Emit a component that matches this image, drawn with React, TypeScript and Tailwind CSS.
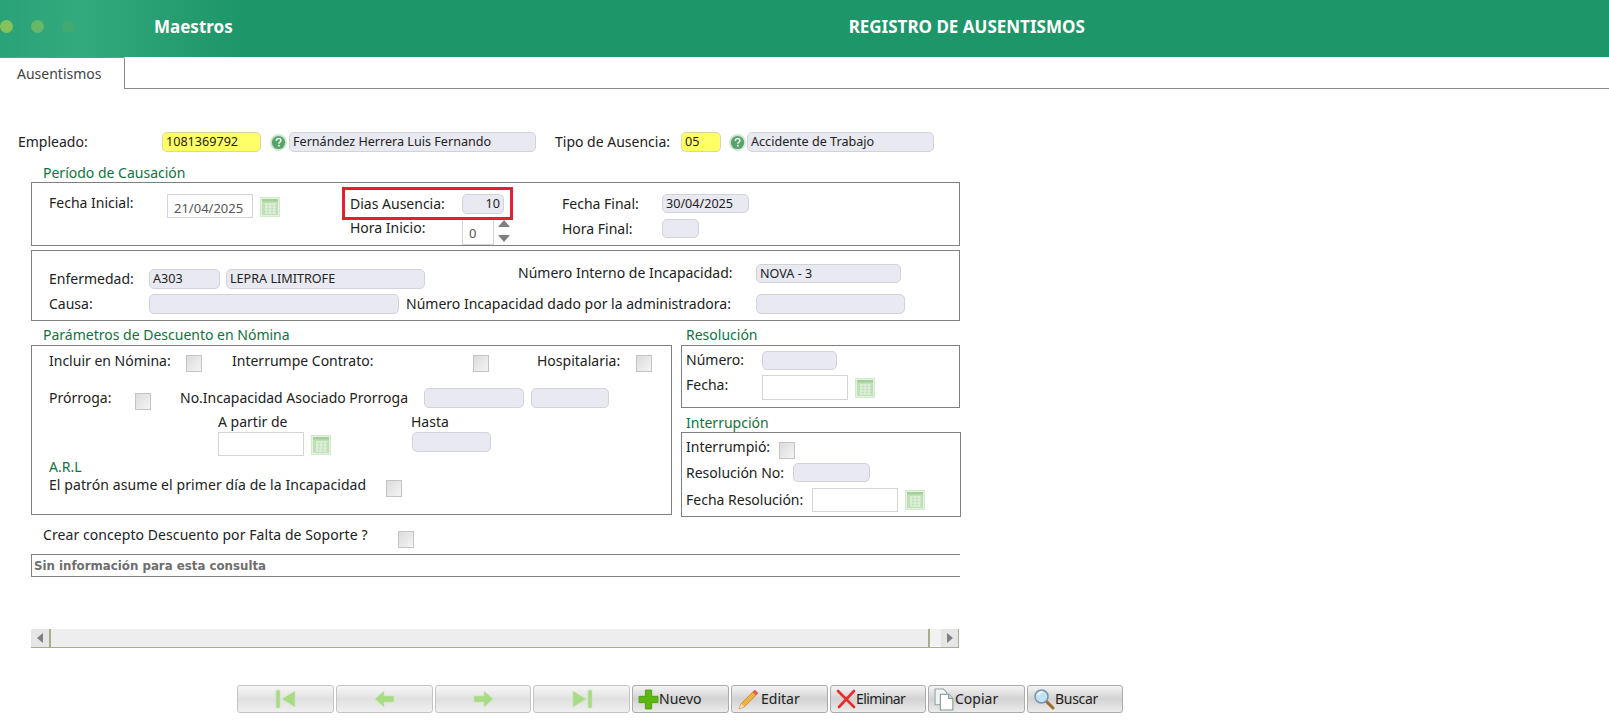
const font = { fontFamily: '"Noto Sans", sans-serif' };

const Ro = ({ className = "", children }: { className?: string; children?: React.ReactNode }) => (
  <div className={`shrink-0 whitespace-nowrap rounded-[5px] border border-[#d2d3d8] bg-[#e8e9f1] px-[3px] text-[12.6px] leading-[17px] text-[#222] ${className}`}>
    {children}
  </div>
);

const DateBox = ({ className = "", children }: { className?: string; children?: React.ReactNode }) => (
  <div className={`shrink-0 border border-[#d4d4d4] bg-white px-[6px] text-[13px] text-[#555] ${className}`}>
    {children}
  </div>
);

const Cal = ({ className = "" }: { className?: string }) => (
  <svg viewBox="0 0 20 20" className={`h-[20px] w-[20px] shrink-0 ${className}`}>
    <rect x="0.5" y="0.5" width="19" height="19" fill="#e4f2df" stroke="#d3e8cd" />
    <rect x="2" y="2" width="16" height="16" fill="#bfe0b6" />
    <rect x="2" y="2" width="16" height="2.5" fill="#a3cf98" />
    <path d="M5 7h11M5 10h11M5 13h11M5 16h11M6 6v11M10 6v11M14 6v11" stroke="#e6f3e2" strokeWidth="1.1" />
  </svg>
);

const Check = ({ className = "" }: { className?: string }) => (
  <div className={`h-[17px] w-[16px] shrink-0 border border-[#c4c4c4] bg-gradient-to-br from-[#dcdcdc] to-[#f4f4f4] ${className}`} />
);

const Help = ({ className = "" }: { className?: string }) => (
  <svg viewBox="0 0 17 17" className={`h-[17px] w-[17px] shrink-0 ${className}`}>
    <circle cx="8.5" cy="8.5" r="8.5" fill="#d4e6d8" />
    <circle cx="8.5" cy="8.5" r="6.6" fill="#58a36a" />
    <path d="M6.2 6.8c.2-1.6 1.3-2.3 2.5-2.3 1.3 0 2.2.9 2.2 2 0 1.6-2 1.7-2.1 3.3" fill="none" stroke="#e9f5ec" strokeWidth="1.6" />
    <rect x="7.9" y="10.8" width="1.8" height="1.8" fill="#e9f5ec" />
  </svg>
);

const Legend = ({ className = "", children }: { className?: string; children: React.ReactNode }) => (
  <div className={`text-[14px] leading-[18px] text-[#0f7340] ${className}`}>{children}</div>
);

const NavBtn = ({ w, children }: { w: string; children: React.ReactNode }) => (
  <div className={`flex h-[28px] shrink-0 items-center justify-center rounded-[3px] border border-[#c4c4c4] bg-gradient-to-b from-[#f7f7f7] via-[#e0e0e0] to-[#f0f0f0] ${w}`}>
    {children}
  </div>
);

const ActBtn = ({ w, children }: { w: string; children: React.ReactNode }) => (
  <div className={`flex h-[28px] shrink-0 items-center justify-start rounded-[3px] border border-[#ababab] bg-gradient-to-b from-[#f4f4f4] via-[#d2d2d2] to-[#ececec] pl-[5px] text-[14px] text-[#222] ${w}`}>
    {children}
  </div>
);

const Arrow = ({ d, bar }: { d: string; bar?: string }) => (
  <svg viewBox="0 0 22 20" className="h-[20px] w-[22px]">
    {bar && <rect x={bar} y="1" width="4" height="18" rx="1.5" fill="#a8dc84" stroke="#c5e8ae" strokeWidth="0.6" />}
    <path d={d} fill="#a8dc84" stroke="#c5e8ae" strokeWidth="0.6" />
  </svg>
);

export default function App() {
  return (
    <div className="h-[721px] w-[1609px] overflow-hidden bg-white text-[14px] leading-[18px] text-[#222]" style={font}>
      {/* cabecera */}
      <div className="flex h-[57px] items-center bg-gradient-to-r from-[#2aa277] via-[#33a97e] via-[5%] to-[#1d9669] to-[15%] pb-[4px]">
        <div className="flex w-[154px] gap-[18px]">
          <span className="h-[13px] w-[13px] rounded-full bg-[#86c25c] blur-[0.5px]" />
          <span className="h-[13px] w-[13px] rounded-full bg-[#66b868] blur-[0.5px]" />
          <span className="h-[13px] w-[13px] rounded-full bg-[#40aa70] blur-[0.5px]" />
        </div>
        <div className="text-[17px] font-bold text-white">Maestros</div>
        <div className="ml-[614px] w-[240px] whitespace-nowrap text-center text-[17px] font-bold text-white">REGISTRO DE AUSENTISMOS</div>
      </div>

      {/* tabs */}
      <div className="flex h-[32px] border-b border-[#8a8a8a]">
        <div className="flex h-[32px] w-[125px] items-center rounded-tr-[2px] border-r border-t border-[#8a8a8a] bg-white pl-[17px] text-[#444]">Ausentismos</div>
      </div>

      {/* empleado */}
      <div className="mt-[43px] flex h-[20px] items-center pl-[18px]">
        <div className="w-[144px]">Empleado:</div>
        <Ro className="h-[20px] w-[99px] border-[#d8d8a0] bg-[#ffff66] text-[#111]">1081369792</Ro>
        <Help className="ml-[9px]" />
        <Ro className="ml-[2px] h-[20px] w-[247px]">Fernández Herrera Luis Fernando</Ro>
        <div className="ml-[19px] w-[126px]">Tipo de Ausencia:</div>
        <Ro className="h-[20px] w-[40px] border-[#d8d8a0] bg-[#ffff66] text-[#111]">05</Ro>
        <Help className="ml-[8px]" />
        <Ro className="ml-[1px] h-[20px] w-[187px]">Accidente de Trabajo</Ro>
      </div>

      <div className="ml-[31px] w-[929px]">
        <Legend className="ml-[12px] mt-[12px]">Período de Causación</Legend>

        {/* periodo */}
        <div className="relative h-[64px] border border-[#808080]">
          <div className="flex h-[24px] pt-[11px] pl-[17px]">
            <div className="w-[118px]">Fecha Inicial:</div>
            <DateBox className="h-[24px] w-[86px] leading-[26px]">21/04/2025</DateBox>
            <Cal className="ml-[7px] mt-[3px]" />
            <div className="ml-[70px] mt-[1px] w-[112px]">Dias Ausencia:</div>
            <Ro className="h-[20px] w-[42px] text-right">10</Ro>
            <div className="ml-[58px] mt-[1px] w-[100px]">Fecha Final:</div>
            <Ro className="h-[19px] w-[87px]">30/04/2025</Ro>
          </div>
          <div className="flex h-[27px] pt-[11px] pl-[318px]">
            <div className="mt-[1px] w-[112px]">Hora Inicio:</div>
            <DateBox className="h-[27px] w-[32px] leading-[28px]">0</DateBox>
            <div className="ml-[4px] mt-[2px] flex h-[22px] flex-col justify-between">
              <div className="h-0 w-0 border-x-[6px] border-b-[7px] border-x-transparent border-b-[#7f7f7f]" />
              <div className="h-0 w-0 border-x-[6px] border-t-[7px] border-x-transparent border-t-[#7f7f7f]" />
            </div>
            <div className="ml-[52px] mt-[2px] w-[100px]">Hora Final:</div>
            <Ro className="mt-[1px] h-[19px] w-[37px]" />
          </div>
          <div className="absolute left-[310px] top-[4px] h-[33px] w-[171px] border-[3px] border-[#e2212a]" />
        </div>

        {/* enfermedad */}
        <div className="mt-[4px] h-[71px] border border-[#808080] pl-[17px]">
          <div className="flex h-[39px] pt-[13px]">
            <div className="mt-[6px] w-[100px]">Enfermedad:</div>
            <Ro className="mt-[5px] h-[20px] w-[71px]">A303</Ro>
            <Ro className="mt-[5px] ml-[6px] h-[20px] w-[199px]">LEPRA LIMITROFE</Ro>
            <div className="ml-[93px] w-[238px] whitespace-nowrap">Número Interno de Incapacidad:</div>
            <Ro className="h-[19px] w-[145px]">NOVA - 3</Ro>
          </div>
          <div className="flex h-[24px] pt-[4px]">
            <div className="mt-[1px] w-[100px]">Causa:</div>
            <Ro className="h-[20px] w-[250px]" />
            <div className="ml-[7px] mt-[1px] w-[350px] whitespace-nowrap">Número Incapacidad dado por la administradora:</div>
            <Ro className="h-[20px] w-[149px]" />
          </div>
        </div>

        <div className="flex gap-[9px]">
          <div className="w-[641px]">
            <Legend className="ml-[12px] mt-[5px]">Parámetros de Descuento en Nómina</Legend>
            <div className="mt-[1px] h-[170px] border border-[#808080] pl-[17px]">
              <div className="flex h-[28px] items-center pt-[6px]">
                <div className="-mt-[4px] w-[137px]">Incluir en Nómina:</div>
                <Check />
                <div className="-mt-[4px] ml-[30px] w-[241px]">Interrumpe Contrato:</div>
                <Check />
                <div className="-mt-[4px] ml-[48px] w-[99px]">Hospitalaria:</div>
                <Check />
              </div>
              <div className="mt-[4px] flex h-[26px] items-center pt-[14px]">
                <div className="w-[86px]">Prórroga:</div>
                <Check className="mt-[6px]" />
                <div className="ml-[29px] w-[244px] whitespace-nowrap">No.Incapacidad Asociado Prorroga</div>
                <Ro className="h-[20px] w-[100px]" />
                <Ro className="ml-[7px] h-[20px] w-[78px]" />
              </div>
              <div className="mt-[9px] flex h-[19px] pl-[169px]">
                <div className="w-[193px]">A partir de</div>
                <div>Hasta</div>
              </div>
              <div className="flex pl-[169px]">
                <DateBox className="h-[24px] w-[86px]" />
                <Cal className="ml-[7px] mt-[3px]" />
                <Ro className="ml-[81px] h-[20px] w-[79px]" />
              </div>
              <Legend className="mt-[2px]">A.R.L</Legend>
              <div className="flex h-[20px] items-center">
                <div className="-mt-[2px] w-[337px] whitespace-nowrap tracking-[0.09px]">El patrón asume el primer día de la Incapacidad</div>
                <Check className="mt-[4px]" />
              </div>
            </div>
          </div>

          <div className="w-[279px]">
            <Legend className="ml-[5px] mt-[5px]">Resolución</Legend>
            <div className="mt-[1px] h-[63px] border border-[#808080] pl-[4px]">
              <div className="flex h-[24px] items-center pt-[5px]">
                <div className="-mt-[2px] w-[76px]">Número:</div>
                <Ro className="h-[19px] w-[75px]" />
              </div>
              <div className="flex pt-[5px]">
                <div className="mt-[1px] w-[76px]">Fecha:</div>
                <DateBox className="h-[25px] w-[86px]" />
                <Cal className="ml-[7px] mt-[3px]" />
              </div>
            </div>
            <Legend className="ml-[5px] mt-[6px]">Interrupción</Legend>
            <div className="h-[85px] w-[280px] border border-[#808080] pl-[4px]">
              <div className="flex h-[28px] items-center pt-[3px]">
                <div className="-mt-[4px] w-[93px]">Interrumpió:</div>
                <Check className="mt-[4px]" />
              </div>
              <div className="mt-[1px] flex h-[20px] items-center pt-[1px]">
                <div className="w-[107px]">Resolución No:</div>
                <Ro className="h-[19px] w-[77px]" />
              </div>
              <div className="mt-[6px] flex items-start">
                <div className="mt-[3px] w-[126px]">Fecha Resolución:</div>
                <DateBox className="h-[24px] w-[86px]" />
                <Cal className="ml-[7px] mt-[2px]" />
              </div>
            </div>
          </div>
        </div>

        <div className="mt-[8px] flex h-[20px] items-center pl-[12px]">
          <div className="w-[355px] whitespace-nowrap tracking-[0.07px]">Crear concepto Descuento por Falta de Soporte ?</div>
          <Check className="mt-[9px]" />
        </div>

        <div className="mt-[9px] flex h-[23px] items-center border-y border-l border-[#808080] pl-[2px] text-[11.8px] font-bold text-[#6e6e6e]" style={{ fontFamily: '"DejaVu Sans", sans-serif' }}>
          Sin información para esta consulta
        </div>

        {/* scroll */}
        <div className="mt-[52px] flex h-[19px] w-[928px] border-b border-[#a8ad8c] bg-[#eeeeee]">
          <div className="flex w-[20px] items-center justify-center border-r-2 border-[#a8ad8c] bg-[#e6e6e6]">
            <div className="h-0 w-0 border-y-[5px] border-r-[6px] border-y-transparent border-r-[#808080]" />
          </div>
          <div className="flex-1 border-r-2 border-[#a8ad8c]" />
          <div className="w-[11px] border-b border-white bg-[#f2f2f2]" />
          <div className="flex w-[18px] items-center justify-center border-r border-[#a8ad8c] bg-[#e6e6e6]">
            <div className="h-0 w-0 border-y-[5px] border-l-[6px] border-y-transparent border-l-[#808080]" />
          </div>
        </div>
      </div>

      {/* botones */}
      <div className="mt-[37px] ml-[237px] flex gap-[2px]">
        <NavBtn w="w-[97px]"><Arrow bar="1" d="M20 2v16L7 10z" /></NavBtn>
        <NavBtn w="w-[97px]"><Arrow d="M1 10l9-8v5h10v6H10v5z" /></NavBtn>
        <NavBtn w="w-[96px]"><Arrow d="M21 10l-9-8v5H2v6h10v5z" /></NavBtn>
        <NavBtn w="w-[97px]"><Arrow bar="17" d="M2 2v16l13-8z" /></NavBtn>
        <ActBtn w="w-[97px]">
          <svg viewBox="0 0 20 20" className="h-[21px] w-[21px]">
            <path d="M7 1h6v6h6v6h-6v6H7v-6H1V7h6z" fill="#5cb810" stroke="#4a9a0c" strokeWidth="0.8" />
          </svg>
          Nuevo
        </ActBtn>
        <ActBtn w="w-[97px]">
          <svg viewBox="0 0 22 22" className="h-[23px] w-[23px]">
            <path d="M17 2l3 3L7 18l-5 2 2-5z" fill="#f2b33d" stroke="#b9812a" strokeWidth="0.8" />
            <path d="M17 2l3 3-2 2-3-3z" fill="#e35b5b" />
            <path d="M2 20l2-5 3 3z" fill="#f5dcb0" />
          </svg>
          <span className="ml-[1px]">Editar</span>
        </ActBtn>
        <ActBtn w="w-[96px]">
          <svg viewBox="0 0 20 20" className="h-[20px] w-[20px] shrink-0">
            <path d="M2 2l16 16M18 2L3 18" stroke="#e82c2c" strokeWidth="2.6" strokeLinecap="round" />
          </svg>
          <span className="tracking-[-0.6px]">Eliminar</span>
        </ActBtn>
        <ActBtn w="w-[97px]">
          <svg viewBox="0 0 20 22" className="h-[23px] w-[21px]">
            <path d="M1 1h8l3 3v12H1z" fill="#f2f4f4" stroke="#93a3a3" />
            <path d="M6 6h8l4 4v11H6z" fill="#fff" stroke="#7f9494" />
            <path d="M14 6v4h4" fill="#d5e0e0" stroke="#7f9494" />
          </svg>
          Copiar
        </ActBtn>
        <ActBtn w="w-[96px]">
          <svg viewBox="0 0 22 22" className="h-[22px] w-[22px]">
            <path d="M13 13l7 7" stroke="#9a6b2a" strokeWidth="3" strokeLinecap="round" />
            <circle cx="8.5" cy="8.5" r="6.5" fill="#bfe2f5" stroke="#7a95ad" strokeWidth="1.6" />
            <path d="M5 7c1-2 2.5-3 4.5-3" stroke="#fff" strokeWidth="1.5" fill="none" />
          </svg>
          <span className="tracking-[-0.3px]">Buscar</span>
        </ActBtn>
      </div>
    </div>
  );
}
